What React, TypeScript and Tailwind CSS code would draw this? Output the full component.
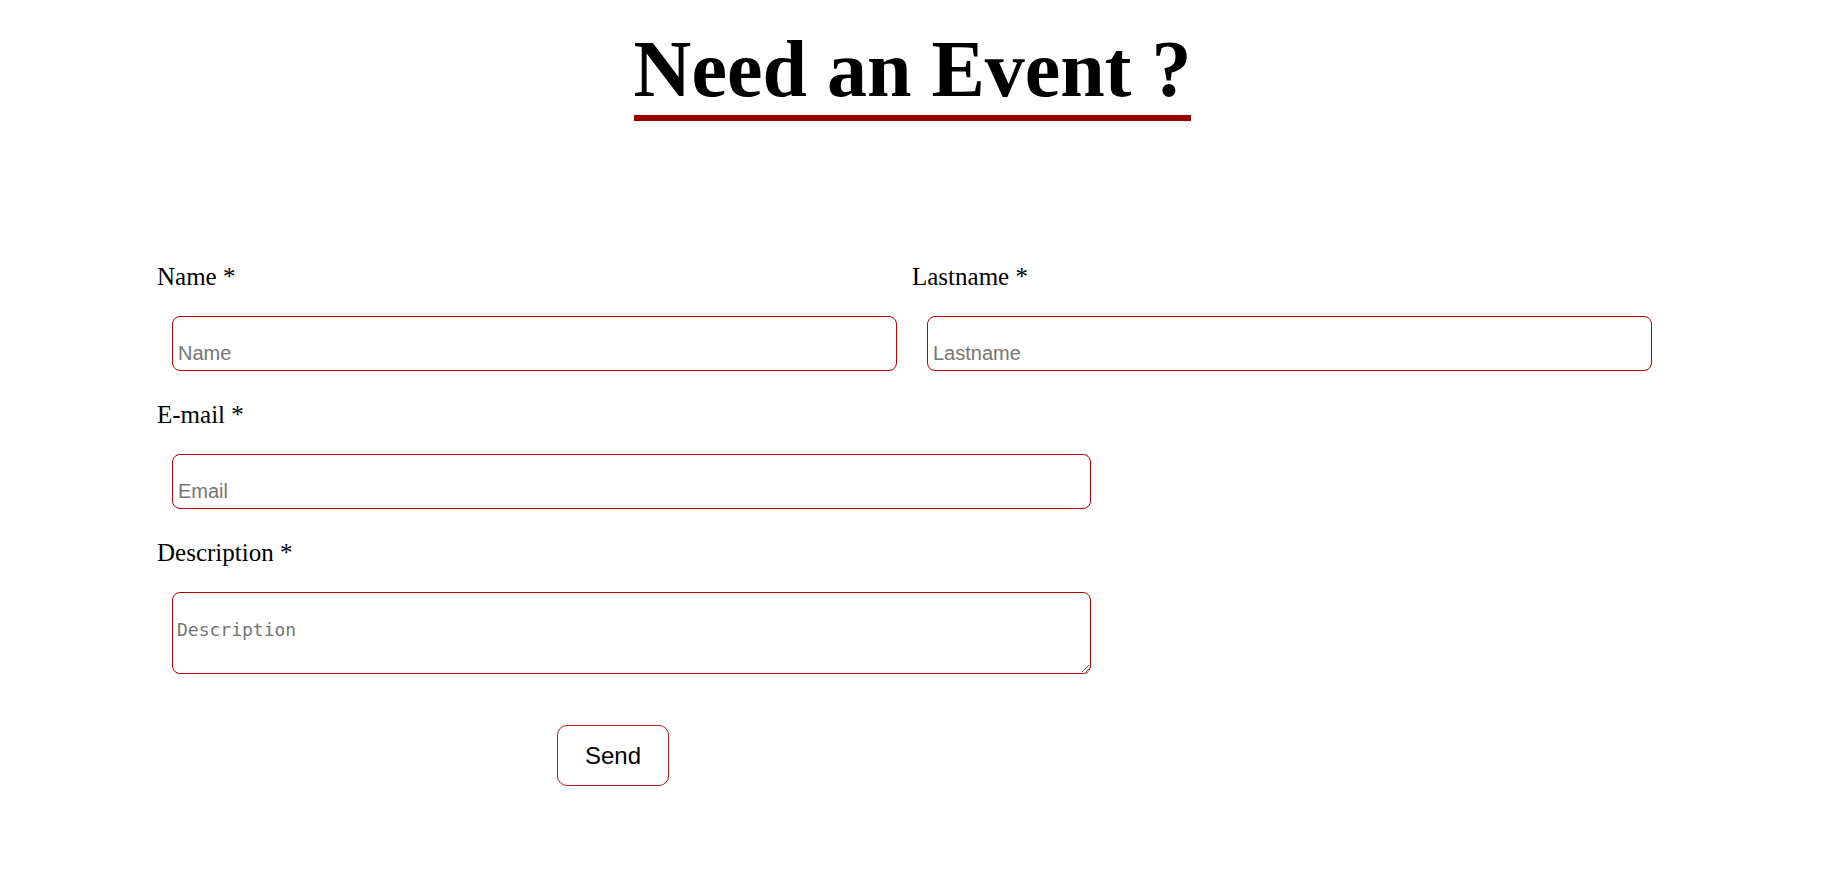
export default function App() {
  const label = "block h-[28px] text-[25px] leading-[28px] text-black";
  const field =
    "block box-border h-[55px] ml-[15px] rounded-[8px] border border-[#bb0000] bg-white pl-[5px] pr-[5px] pt-[24px] pb-[5px] font-['Liberation_Sans',Arial,sans-serif] text-[20px] text-black outline-none placeholder:text-[#757575]";

  return (
    <div className="min-h-screen bg-white font-['Liberation_Serif','Times_New_Roman',serif] text-black">
      <div className="flex justify-center pr-[12px] pt-[23px]">
        <h1 className="inline-block border-b-[6px] border-[#990000] text-[80px] font-bold leading-[92px]">
          Need an Event ?
        </h1>
      </div>

      <form className="mt-[142px] pl-[157px]" onSubmit={(e) => e.preventDefault()}>
        <div className="grid grid-cols-[740px_740px] gap-x-[15px]">
          <div>
            <label className={label}>Name *</label>
            <input className={`${field} mt-[25px] w-[725px]`} placeholder="Name" />
          </div>
          <div>
            <label className={label}>Lastname *</label>
            <input className={`${field} mt-[25px] w-[725px]`} placeholder="Lastname" />
          </div>
        </div>

        <div className="mt-[30px]">
          <label className={label}>E-mail *</label>
          <input className={`${field} mt-[25px] w-[919px]`} placeholder="Email" />
        </div>

        <div className="mt-[30px]">
          <label className={label}>Description *</label>
          <textarea
            className="mt-[25px] ml-[15px] block box-border h-[82px] w-[919px] rounded-[8px] border border-[#bb0000] bg-white pl-[4px] pr-[4px] pt-[26px] pb-[4px] font-['DejaVu_Sans_Mono',monospace] text-[18px] leading-[21px] text-black outline-none placeholder:text-[#757575]"
            placeholder="Description"
          />
        </div>

        <button
          type="submit"
          className="mt-[51px] ml-[400px] flex h-[61px] w-[112px] items-center justify-center rounded-[10px] border border-[#b31b1b] bg-white font-['Liberation_Sans',Arial,sans-serif] text-[24px] text-black"
        >
          Send
        </button>
      </form>
    </div>
  );
}
